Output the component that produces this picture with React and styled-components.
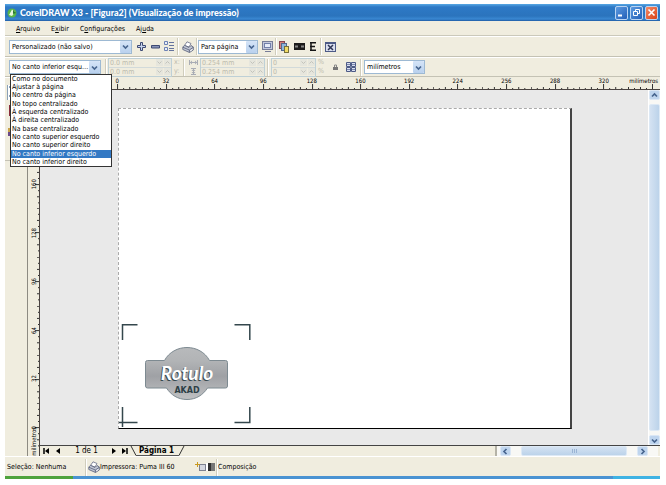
import React from 'react';
import styled, { createGlobalStyle, css } from 'styled-components';

const GlobalStyle = createGlobalStyle`
  *, *::before, *::after { box-sizing: border-box; }
  body {
    margin: 0;
    background: #fff;
    color: #000;
    font-family: 'DejaVu Sans Condensed', 'DejaVu Sans', 'Liberation Sans', sans-serif;
    font-size: 7px;
    line-height: 10px;
  }
  button, select, input { font: inherit; color: inherit; margin: 0; }
  svg { display: block; flex: none; }
`;

const Shell = styled.div`
  height: 100vh;
  padding: 4px 6px 6px 5px;
`;

const Window = styled.div`
  height: 100%;
  display: flex;
  flex-direction: column;
  background: #f0eddf;
`;

const TitleBar = styled.header`
  flex: none;
  height: 17px;
  display: flex;
  align-items: center;
  gap: 3px;
  padding: 0 0 0 2px;
  background: linear-gradient(#58a8e4 0, #2d79c6 3px, #2b74bd 12px, #3a88d2 15px, #1f5ca6 17px);
`;

const Title = styled.h1`
  flex: 1;
  margin: 0;
  color: #fff;
  font-family: Lato, 'Open Sans', sans-serif;
  font-size: 9px;
  line-height: 12px;
  font-weight: 900;
  white-space: nowrap;
`;

const WindowButtons = styled.div`
  display: flex;
  gap: 2px;
  padding-right: 2px;
`;

const WindowButton = styled.button`
  width: 13px;
  height: 14px;
  padding: 0;
  display: grid;
  place-items: center;
  border: 1px solid #b9d4f2;
  border-radius: 2px;
  background: ${(p) => (p.$close ? 'linear-gradient(135deg, #f28a66, #dc4318)' : 'linear-gradient(135deg, #5b9ae0, #2460b8)')};
`;

const MenuBar = styled.nav`
  flex: none;
  height: 15px;
  display: flex;
  align-items: center;
  gap: 11px;
  padding: 2px 0 0 11px;
  border-bottom: 1px solid #cbc9bb;
`;

const MenuButton = styled.button`
  padding: 0;
  border: 0;
  background: none;
  line-height: 10px;
`;

const ToolRow = styled.div`
  flex: none;
  height: ${(p) => p.$height}px;
  display: flex;
  align-items: center;
  padding-left: 4px;
  border-top: 1px solid #fff;
  border-bottom: 1px solid #c4c2b4;
`;

const IconButton = styled.button`
  flex: none;
  width: ${(p) => p.$width || 14}px;
  height: 16px;
  padding: 0;
  display: grid;
  place-items: center;
  border: 0;
  background: none;
`;

const Separator = styled.span`
  flex: none;
  width: 2px;
  height: 17px;
  margin: 0 ${(p) => p.$gap || 0}px;
  border-left: 1px solid #d0cdbd;
  border-right: 1px solid #fff;
`;

const SelectBox = styled.div`
  position: relative;
  flex: none;
  display: flex;
  align-items: center;
  width: ${(p) => p.$width}px;
  height: 14px;
  margin-right: ${(p) => p.$after || 0}px;
  border: 1px solid #9db9d3;
  background: #fff;
`;

const Select = styled.select`
  flex: 1;
  min-width: 0;
  height: 12px;
  padding: 0 0 0 2px;
  appearance: none;
  border: 0;
  outline: 0;
  background: none;
  line-height: 12px;
  text-overflow: ellipsis;
`;

const Arrow = styled.span`
  width: 11px;
  height: 12px;
  display: grid;
  place-items: center;
  border-radius: 1px;
  background: linear-gradient(#d5e4f7, #b9d1ee);
  pointer-events: none;
`;

const Options = styled.ul`
  position: absolute;
  z-index: 5;
  top: 13px;
  left: 0;
  width: 102px;
  margin: 0;
  padding: 0;
  list-style: none;
  border: 1px solid #333;
  background: #fff;
`;

const Option = styled.li`
  height: 8px;
  padding-left: 1px;
  line-height: 8px;
  white-space: nowrap;
  &:nth-child(3n) { height: 9px; }
  ${(p) => p.$selected && css`
    background: #3379c4;
    color: #fff;
  `}
`;

const SpinPair = styled.div`
  flex: none;
  display: grid;
  grid-template-columns: minmax(0, 1fr);
  width: ${(p) => p.$width}px;
  border: 1px solid #bed0d6;
`;

const SpinRow = styled.div`
  display: flex;
  align-items: center;
  height: 8px;
  gap: 1px;
  & + & { border-top: 1px solid #d2dada; height: 9px; }
`;

const SpinInput = styled.input`
  flex: 1;
  min-width: 0;
  height: 8px;
  padding: 0 0 0 1px;
  border: 0;
  background: none;
  line-height: 8px;
  &:disabled { color: #bcbaac; }
`;

const Units = styled.div`
  flex: none;
  display: grid;
  width: ${(p) => p.$width}px;
  padding-left: 2px;
  color: #bcbaac;
  line-height: 9px;
`;

const Body = styled.div`
  flex: 1;
  min-height: 0;
  display: flex;
`;

const Toolbox = styled.aside`
  flex: none;
  width: 22px;
`;

const ToolPanel = styled.div`
  height: 84px;
  padding: 7px 0 0 1px;
  border-top: 1px solid #fff;
  border-bottom: 1px solid #c4c2b4;
`;

const Stage = styled.main`
  flex: 1;
  min-width: 0;
  display: flex;
  flex-direction: column;
`;

const HRuler = styled.div`
  flex: none;
  height: 13px;
  display: flex;
  padding-left: 66px;
  border-bottom: 1px solid #4a4340;
  font-size: 6px;
  line-height: 8px;
`;

const HScale = styled.div`
  flex: 1;
  display: grid;
  grid-template-columns: repeat(11, minmax(0, 1fr));
`;

const Cell = styled.div`
  display: grid;
  grid-template-rows: minmax(0, 1fr);
  min-height: 0;
  text-align: center;
  & > * { grid-area: 1 / 1; }
`;

const HUnit = styled(Cell)`
  width: 32px;
  padding-right: 2px;
  text-align: right;
`;

const View = styled.div`
  flex: 1;
  min-height: 0;
  display: flex;
`;

const VRuler = styled.div`
  position: relative;
  flex: none;
  width: 13px;
  display: grid;
  grid-template-rows: repeat(7, minmax(0, 1fr));
  padding: 21px 0 4px;
  border-left: 1px solid #8d8b82;
  border-right: 1px solid #4a4340;
  font-size: 6px;
  line-height: 8px;
`;

const VLabel = styled.span`
  justify-self: start;
  align-self: center;
  margin-left: 2px;
  writing-mode: vertical-rl;
  transform: rotate(180deg);
`;

const VUnit = styled.span`
  position: absolute;
  left: 2px;
  bottom: 0;
  writing-mode: vertical-rl;
  transform: rotate(180deg);
  line-height: 7px;
`;

const Work = styled.div`
  flex: 1;
  min-width: 0;
  display: flex;
  flex-direction: column;
`;

const CanvasRow = styled.div`
  flex: 1;
  min-height: 0;
  display: flex;
`;

const Canvas = styled.div`
  flex: 1;
  display: flex;
  padding: 18px 76px 16px 78px;
  background: #e9e9e9;
`;

const Sheet = styled.div`
  flex: 1;
  display: flex;
  flex-direction: column;
  justify-content: flex-end;
  align-items: flex-start;
  border: 1px dashed #aaa;
  border-right: 2px solid #444;
  border-bottom: 1px solid #000;
  background: #fff;
`;

const Artwork = styled.div`
  position: relative;
  display: grid;
`;

const LabelText = styled.div`
  position: absolute;
  left: 27px;
  top: ${(p) => p.$top}px;
  width: 82px;
  text-align: center;
`;

const Brand = styled(LabelText)`
  color: #fff;
  font: italic 700 19px/22px Lato, 'Open Sans', sans-serif;
  text-shadow: -1px 1px 0 #35494f;
`;

const SubBrand = styled(LabelText)`
  color: #2d4046;
  font: 700 8px/10px 'DejaVu Sans', sans-serif;
`;

const VScroll = styled.div`
  flex: none;
  width: 12px;
  display: flex;
  flex-direction: column;
  gap: 4px;
  background: #f8f8f5;
  border-left: 1px solid #fff;
`;

const HScroll = styled.div`
  flex: 0 0 163px;
  display: flex;
  align-items: center;
  gap: 10px;
  margin-right: 2px;
  padding: 0 10px 0 3px;
  background: #f8f8f5;
  border-left: 2px solid #b5b3a7;
`;

const ScrollButton = styled.button`
  flex: none;
  width: 11px;
  height: 10px;
  padding: 0;
  display: grid;
  place-items: center;
  border: 1px solid #dbe7f5;
  border-radius: 2px;
  background: #bfd5ee;
`;

const Thumb = styled.div`
  flex: 1;
  min-height: 10px;
  display: grid;
  place-items: center;
  border: 1px solid #dde9f5;
  border-radius: 2px;
  background: linear-gradient(${(p) => (p.$vertical ? '90deg' : '180deg')}, #d4e2f2, #bcd3ea);
`;

const TabRow = styled.div`
  flex: none;
  height: 11px;
  display: flex;
  border-top: 1px solid #444;
`;

const Pager = styled.div`
  display: flex;
  align-items: center;
  width: 90px;
  padding-left: 1px;
  font-size: 8px;
`;

const PagerButton = styled.button`
  width: ${(p) => p.$width}px;
  height: 10px;
  padding: 0;
  display: grid;
  place-items: center;
  border: 0;
  background: none;
`;

const PageCount = styled.span`
  flex: 1;
  text-align: center;
  white-space: nowrap;
`;

const PageTab = styled.button`
  display: flex;
  align-items: center;
  height: 10px;
  padding: 0;
  border: 0;
  background: none;
  font-size: 8px;
  font-weight: 700;
  white-space: nowrap;
`;

const TabText = styled.span`
  height: 10px;
  padding: 0 5px 0 3px;
  border-bottom: 1px solid #555;
  line-height: 9px;
`;

const Filler = styled.div`
  flex: 1;
`;

const StatusBar = styled.footer`
  flex: none;
  height: 20px;
  display: flex;
  align-items: center;
  padding: 1px 0 0 2px;
  border-top: 1px solid #fff;
  line-height: 10px;
  white-space: nowrap;
`;

const StatusCell = styled.div`
  display: flex;
  align-items: center;
  width: ${(p) => p.$width}px;
`;

const Taskbar = styled.div`
  flex: none;
  height: 3px;
  background: linear-gradient(90deg, #4fa33c 0 68px, #4a93d2 68px calc(100% - 47px), #3fb3e3 calc(100% - 47px));
`;

const Chevron = ({ dir = 'down' }) => {
  const d = {
    down: 'M1 2.5 3.5 5 6 2.5',
    up: 'M1 4.5 3.5 2 6 4.5',
    left: 'M4.5 1 2 3.5 4.5 6',
    right: 'M2.5 1 5 3.5 2.5 6',
  }[dir];
  return (
    <svg width="7" height="7" aria-hidden="true">
      <path d={d} fill="none" stroke="#47658f" strokeWidth="1.7" />
    </svg>
  );
};

const HTicks = () => (
  <svg width="100%" height="12" aria-hidden="true">
    {[0, 1, 2, 3, 4, 5, 6, 7].map((i) => {
      const x = `${i * 12.5 + 0.5}%`;
      const h = i === 4 ? 5 : i % 2 ? 1 : 2;
      return <line key={i} x1={x} x2={x} y1={12 - h} y2="12" stroke="#333" />;
    })}
  </svg>
);

const VTicks = () => (
  <svg width="11" height="100%" aria-hidden="true">
    {[0, 1, 2, 3, 4, 5, 6, 7].map((i) => {
      const y = `${i * 12.5 + 0.5}%`;
      const w = i === 4 ? 4 : i % 2 ? 1 : 2;
      return <line key={i} y1={y} y2={y} x1={11 - w} x2="11" stroke="#333" />;
    })}
  </svg>
);

const Spinners = () => (
  <svg width="15" height="7" aria-hidden="true">
    <rect x="0" y="0" width="7" height="7" fill="#e6e6dd" />
    <rect x="8" y="0" width="7" height="7" fill="#e6e6dd" />
    <path d="M1.5 2.5 3.5 4.5 5.5 2.5M9.5 4.5 11.5 2.5 13.5 4.5" fill="none" stroke="#c3c3bb" />
  </svg>
);

const Printer = ({ size = 12 }) => (
  <svg width={size} height={size} viewBox="0 0 12 12" aria-hidden="true">
    <path d="M2.5 4.5 5 .8 9 2.5 7 6z" fill="#fff" stroke="#676d85" strokeWidth=".8" />
    <path d="M.8 6 2.5 4.3 7 6.5 9 4.5 11.3 6v3L7.5 11.5.8 8.5z" fill="#c3c8d5" stroke="#565d78" strokeWidth=".8" />
    <path d="M1 6.3 7.3 9 11.3 6.3M7.4 9v2.300" fill="none" stroke="#565d78" strokeWidth=".8" />
    <path d="M8.3 9.8 10.5 8.4" stroke="#fff" />
  </svg>
);

function Dropdown({ label, value, options, width, after, children }) {
  return (
    <SelectBox $width={width} $after={after}>
      <Select aria-label={label} defaultValue={value}>
        {(options || [value]).map((o) => <option key={o}>{o}</option>)}
      </Select>
      <Arrow><Chevron /></Arrow>
      {children}
    </SelectBox>
  );
}

function Spin({ labels, values, width }) {
  return (
    <SpinPair $width={width}>
      {labels.map((label, i) => (
        <SpinRow key={label}>
          <SpinInput aria-label={label} disabled defaultValue={values[i]} />
          <Spinners />
        </SpinRow>
      ))}
    </SpinPair>
  );
}

const positions = [
  'Como no documento', 'Ajustar à página', 'No centro da página', 'No topo centralizado',
  'À esquerda centralizado', 'À direita centralizado', 'Na base centralizado',
  'No canto superior esquerdo', 'No canto superior direito', 'No canto inferior esquerdo',
  'No canto inferior direito',
];

const hLabels = [0, 32, 64, 96, 128, 160, 192, 224, 256, 288, 320];
const vLabels = [192, 160, 128, 96, 64, 32, 0];

function Toolbars() {
  return (
    <>
      <ToolRow $height={21}>
        <Dropdown label="Estilo de impressão" value="Personalizado (não salvo)" width={123} after={2} />
        <IconButton aria-label="Adicionar" $width={14}>
          <svg width="9" height="9"><path d="M3.5.5h2v3h3v2h-3v3h-2v-3h-3v-2h3z" fill="#c8d5ee" stroke="#3e4a72" /></svg>
        </IconButton>
        <IconButton aria-label="Remover" $width={14}>
          <svg width="9" height="4"><path d="M.5.5h8v2.5h-8z" fill="#8793b8" stroke="#3e4a72" /></svg>
        </IconButton>
        <IconButton aria-label="Opções" $width={15}>
          <svg width="11" height="11">
            <path d="M.5.5h3v3h-3zM.5 6.5h3v3h-3z" fill="#e9eef8" stroke="#6d82b5" />
            <path d="M5 1.5h5M5 4.5h5M5 7.5h5M5 9.500h5" stroke="#65749e" />
          </svg>
        </IconButton>
        <Separator />
        <IconButton aria-label="Imprimir" $width={17}><Printer /></IconButton>
        <Separator />
        <Dropdown label="Zoom" value="Para página" width={60} after={2} />
        <IconButton aria-label="Tela inteira" $width={15}>
          <svg width="11" height="11">
            <rect x=".5" y=".5" width="10" height="8" fill="#c3c8dc" stroke="#777d98" />
            <rect x="2.5" y="2.5" width="6" height="4" fill="#e6ebf8" stroke="#7280aa" />
            <path d="M3 10.5h6" stroke="#777d98" />
          </svg>
        </IconButton>
        <Separator />
        <IconButton aria-label="Separações" $width={15}>
          <svg width="11" height="12">
            <rect x=".5" y=".5" width="5" height="7" fill="#d5837c" stroke="#8a4650" />
            <rect x="2.5" y="2.5" width="5" height="7" fill="#8eb7dd" stroke="#53698f" />
            <rect x="5.5" y="5.5" width="4" height="6" fill="#f0dc66" stroke="#77703c" />
          </svg>
        </IconButton>
        <IconButton aria-label="Negativo" $width={14}>
          <svg width="11" height="7">
            <path d="M0 0h11v7H0z" fill="#1b1b1b" />
            <path d="M1 2.5h3v2h-3zM7 2.5h3v2h-3z" fill="#888" />
          </svg>
        </IconButton>
        <IconButton aria-label="Espelho" $width={14}>
          <svg width="6" height="9"><path d="M1 0v9M0 .7h6M0 4.5h5M0 8.3h6" stroke="#151515" strokeWidth="1.5" /></svg>
        </IconButton>
        <Separator />
        <IconButton aria-label="Fechar visualização" $width={16}>
          <svg width="11" height="10">
            <rect x=".5" y=".5" width="10" height="9" fill="#d9deef" stroke="#4d5a86" />
            <path d="M1 1.5h9" stroke="#4d5a86" />
            <path d="M3 3 8 8M8 3 3 8" stroke="#2d3555" strokeWidth="1.5" />
          </svg>
        </IconButton>
      </ToolRow>
      <ToolRow $height={20}>
        <Dropdown label="Posição na página" value="No canto inferior esquerdo" options={positions} width={92} after={3}>
          <Options role="listbox" aria-label="Posições">
            {positions.map((p) => (
              <Option key={p} role="option" aria-selected={p === positions[9]} $selected={p === positions[9]}>{p}</Option>
            ))}
          </Options>
        </Dropdown>
        <Separator $gap={1} />
        <Spin labels={['Posição x', 'Posição y']} values={['0.0 mm', '0.0 mm']} width={64} />
        <Units $width={10}><span>x:</span><span>y:</span></Units>
        <Separator $gap={1} />
        <IconButton aria-label="Tamanho" $width={14} disabled>
          <svg width="9" height="16">
            <path d="M.5 1v5M8.5 1v5M1 3.5h7M2 9.5h5M2 15.5h5M4.5 9v7" stroke="#a9acb5" />
            <path d="M1 3.5 3 1.5v4zM8 3.5 6 1.5v4zM4.5 10l2 2h-4zM4.500 15l2-2h-4z" fill="#a9acb5" />
          </svg>
        </IconButton>
        <Spin labels={['Largura', 'Altura']} values={['0.254 mm', '0.254 mm']} width={65} />
        <Separator $gap={2} />
        <Spin labels={['Escala x', 'Escala y']} values={['0', '0']} width={45} />
        <Units $width={10}><span>%</span><span>%</span></Units>
        <IconButton aria-label="Manter proporção" $width={18}>
          <svg width="5" height="7"><path d="M1.5 3V1h2v2" fill="none" stroke="#888" /><path d="M0 3h5v3H0z" fill="#777" /></svg>
        </IconButton>
        <IconButton aria-label="Lado a lado" $width={14}>
          <svg width="10" height="11">
            <path d="M.5.5h4v4h-4zM5.5.5h4v4h-4zM.5 5.5h4v4h-4zM5.5 5.5h4v4h-4z" fill="#d9dff0" stroke="#4d5a86" />
            <path d="M1 2.500h3M6 2.5h3M1 7.5h3M6 7.5h3" stroke="#7c88ae" />
          </svg>
        </IconButton>
        <Separator $gap={2} />
        <Dropdown label="Unidades" value="milímetros" width={61} />
      </ToolRow>
    </>
  );
}

function LabelArt() {
  return (
    <Artwork>
      <svg width="134" height="104" aria-hidden="true">
        <defs>
          <linearGradient id="metal" x1="0" y1="0" x2="0" y2="1">
            <stop offset="0" stopColor="#b8babc" />
            <stop offset=".25" stopColor="#b2b4b6" />
            <stop offset=".55" stopColor="#9fa1a5" />
            <stop offset="1" stopColor="#c0c1c3" />
          </linearGradient>
        </defs>
        <path
          d="M28.5 36.5h17C50 28 59 23.5 68 23.5s18 4.5 22.5 13h16q2 0 2 2v23.500q0 2-2 2H88.500C84 71 77 75.500 68 75.500s-16-4.500-20.500-11.500H28.500q-2 0-2-2V38.500q0-2 2-2z"
          fill="url(#metal)"
          stroke="#7d8a91"
        />
        <path d="M3.500 16V.8H18.500M115.500.8H130.800V16M115.500 98.500H130.800V83M0 98.500H18.500M3.500 83V103" fill="none" stroke="#34474d" strokeWidth="1.500" />
      </svg>
      <Brand $top={38}>Rotulo</Brand>
      <SubBrand $top={62}>AKAD</SubBrand>
    </Artwork>
  );
}

export default function App() {
  return (
    <>
      <GlobalStyle />
      <Shell>
        <Window>
          <TitleBar>
            <svg width="10" height="10" aria-hidden="true">
              <circle cx="5" cy="5" r="4.5" fill="#58b548" />
              <path d="M2 7 5 1.5 8 4 5 8z" fill="#e8f6df" />
              <path d="M6 2 9 5 6 6z" fill="#2b7b31" />
            </svg>
            <Title>CorelDRAW X3 - [Figura2] (Visualização de impressão)</Title>
            <WindowButtons>
              <WindowButton aria-label="Minimizar"><svg width="9" height="9"><path d="M1 7.5h4" stroke="#fff" strokeWidth="2" /></svg></WindowButton>
              <WindowButton aria-label="Restaurar"><svg width="9" height="9"><path d="M3.5 3V1.5h4v4H6M1.5 3.5h4v4h-4z" fill="none" stroke="#fff" /></svg></WindowButton>
              <WindowButton $close aria-label="Fechar"><svg width="9" height="9"><path d="M1.5 1.5 7.5 7.5M7.5 1.5 1.5 7.5" stroke="#fff" strokeWidth="1.6" /></svg></WindowButton>
            </WindowButtons>
          </TitleBar>
          <MenuBar>
            <MenuButton><u>A</u>rquivo</MenuButton>
            <MenuButton>E<u>x</u>ibir</MenuButton>
            <MenuButton>C<u>o</u>nfigurações</MenuButton>
            <MenuButton>Aj<u>u</u>da</MenuButton>
          </MenuBar>
          <Toolbars />
          <Body>
            <Toolbox>
              <ToolPanel>
                <svg width="4" height="70" aria-hidden="true">
                  <path d="M1 0h3v15H1z" fill="#fff" />
                  <path d="M1.5 0v15M3.500 1v2M3.500 10v2" stroke="#8aa0b8" />
                  <path d="M3 20h1v11H3z" fill="#8a2d3c" />
                  <path d="M2 43h2v4H2z" fill="#c9a34a" />
                  <path d="M2 47h2v4H2z" fill="#6b4a8a" />
                </svg>
              </ToolPanel>
            </Toolbox>
            <Stage>
              <HRuler>
                <HScale>
                  {hLabels.map((n) => <Cell key={n}><span>{n}</span><HTicks /></Cell>)}
                </HScale>
                <HUnit>
                  <svg width="30" height="12" aria-hidden="true">
                    <path d="M.5 10v2M6.500 11v1M12.500 10v2M18.500 11v1M24.500 7v5" stroke="#333" />
                  </svg>
                  <span>milímetros</span>
                </HUnit>
              </HRuler>
              <View>
                <VRuler>
                  {vLabels.map((n) => <Cell key={n}><VTicks /><VLabel>{n}</VLabel></Cell>)}
                  <VUnit>milímetros</VUnit>
                </VRuler>
                <Work>
                  <CanvasRow>
                    <Canvas>
                      <Sheet><LabelArt /></Sheet>
                    </Canvas>
                    <VScroll>
                      <ScrollButton aria-label="Para cima"><Chevron dir="up" /></ScrollButton>
                      <Thumb $vertical />
                      <ScrollButton aria-label="Para baixo"><Chevron /></ScrollButton>
                    </VScroll>
                  </CanvasRow>
                  <TabRow>
                    <Pager>
                      <PagerButton $width={10} aria-label="Primeira página"><svg width="6" height="6"><path d="M1 0v6" stroke="#000" strokeWidth="1.5" /><path d="M6 0v6L2 3z" /></svg></PagerButton>
                      <PagerButton $width={13} aria-label="Página anterior"><svg width="4" height="6"><path d="M4 0v6L0 3z" /></svg></PagerButton>
                      <PageCount>1 de 1</PageCount>
                      <PagerButton $width={10} aria-label="Próxima página"><svg width="4" height="6"><path d="M0 0v6l4-3z" /></svg></PagerButton>
                      <PagerButton $width={11} aria-label="Última página"><svg width="6" height="6"><path d="M5 0v6" stroke="#000" strokeWidth="1.5" /><path d="M0 0v6l4-3z" /></svg></PagerButton>
                    </Pager>
                    <PageTab>
                      <svg width="6" height="10" aria-hidden="true"><path d="M1 0 6 9.5" stroke="#333" /></svg>
                      <TabText>Página 1</TabText>
                      <svg width="6" height="10" aria-hidden="true"><path d="M5 0 0 9.5" stroke="#333" /></svg>
                    </PageTab>
                    <Filler />
                    <HScroll>
                      <ScrollButton aria-label="Para a esquerda"><Chevron dir="left" /></ScrollButton>
                      <Thumb><svg width="5" height="5"><path d="M.5 0v4M2.5 0v4M4.5 0v4" stroke="#9ab4d4" /></svg></Thumb>
                      <ScrollButton aria-label="Para a direita"><Chevron dir="right" /></ScrollButton>
                    </HScroll>
                  </TabRow>
                </Work>
              </View>
            </Stage>
          </Body>
          <StatusBar>
            <StatusCell $width={77}>Seleção: Nenhuma</StatusCell>
            <Separator $gap={1} />
            <StatusCell $width={107}><Printer size={12} />Impressora: Puma III 60</StatusCell>
            <StatusCell $width={21}>
              <svg width="20" height="10" aria-hidden="true">
                <rect x="4.5" y="2.5" width="6" height="6" fill="#d5d7df" stroke="#7d8190" />
                <path d="M0 2.5h5M2.5 0v5" stroke="#c99a20" />
                <path d="M11 1h2v8h-2z" fill="#fff" />
                <path d="M13 1h3v8h-3z" fill="#333" />
                <path d="M16 1h4v8h-4z" fill="#777" />
              </svg>
            </StatusCell>
            <Separator />
            <StatusCell>Composição</StatusCell>
          </StatusBar>
          <Taskbar />
        </Window>
      </Shell>
    </>
  );
}
